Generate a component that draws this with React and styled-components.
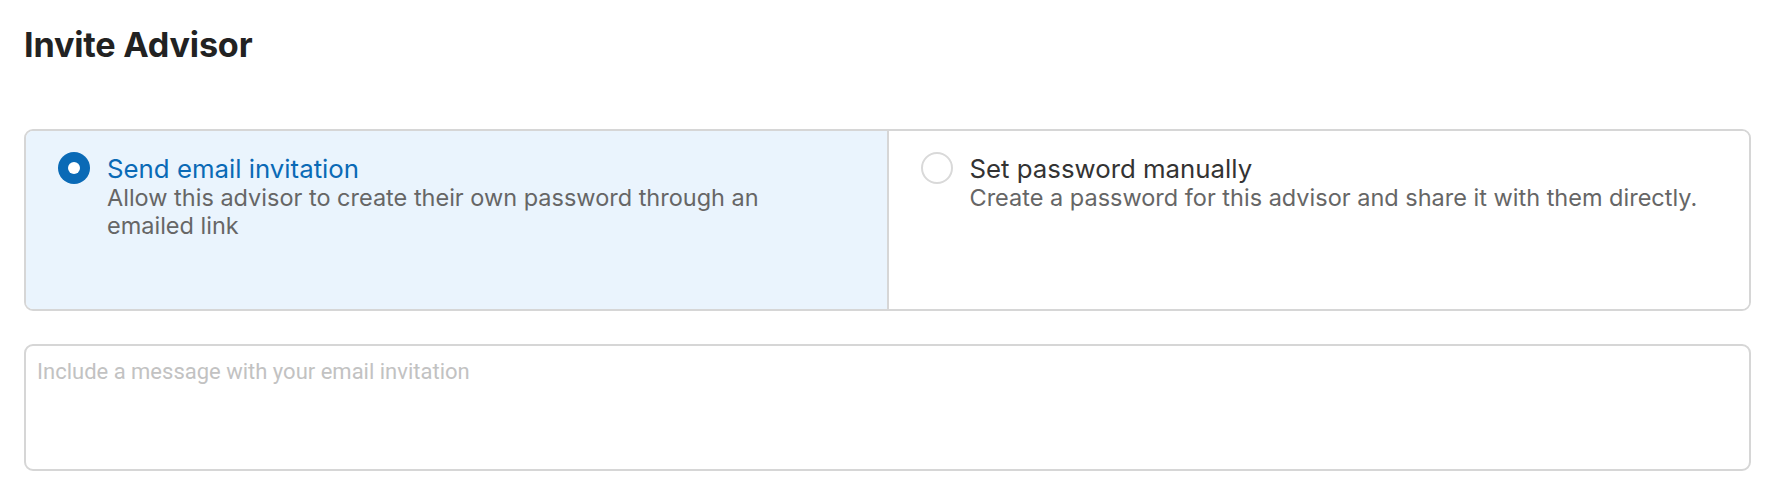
import styled, { createGlobalStyle } from 'styled-components';

const GlobalStyle = createGlobalStyle`
  body {
    margin: 0;
    background: #ffffff;
    font-family: Inter, "Liberation Sans", sans-serif;
  }
`;

const options = [
  {
    id: 'email',
    title: 'Send email invitation',
    description: 'Allow this advisor to create their own password through an emailed link',
  },
  {
    id: 'manual',
    title: 'Set password manually',
    description: 'Create a password for this advisor and share it with them directly.',
  },
];

const InviteAdvisor = () => {
  const selected = 'email';
  return (
    <Page>
      <GlobalStyle />
      <Heading>Invite Advisor</Heading>
      <OptionGroup>
        {options.map(option => (
          <Option key={option.id} active={option.id === selected}>
            <Radio active={option.id === selected} />
            <OptionText>
              <OptionTitle active={option.id === selected}>{option.title}</OptionTitle>
              <OptionDescription>{option.description}</OptionDescription>
            </OptionText>
          </Option>
        ))}
      </OptionGroup>
      <MessageBox placeholder="Include a message with your email invitation" />
    </Page>
  );
};

const Page = styled.div`
  padding: 0 25px 0 24px;
  box-sizing: border-box;
  width: 100%;
`;

const Heading = styled.h1`
  margin: 0;
  padding-top: 25px;
  font-size: 34.2px;
  line-height: 40px;
  font-weight: 700;
  color: #222222;
  letter-spacing: -0.2px;
`;

const OptionGroup = styled.div`
  margin-top: 64px;
  display: flex;
  height: 182px;
  border: 2px solid #d6d6d6;
  border-radius: 9px;
  overflow: hidden;
  box-sizing: border-box;
`;

const Option = styled.div`
  flex: 1;
  min-width: 0;
  display: flex;
  align-items: flex-start;
  gap: 17px;
  padding: 21px 32px;
  background: ${props => (props.active ? '#eaf4fd' : '#ffffff')};
  & + & {
    border-left: 2px solid #d6d6d6;
  }
`;

const Radio = styled.span`
  flex: none;
  width: 32px;
  height: 32px;
  border-radius: 50%;
  box-sizing: border-box;
  position: relative;
  background: ${props => (props.active ? '#0a6ab6' : '#ffffff')};
  border: ${props => (props.active ? 'none' : '2px solid #d9d9d9')};
  &::after {
    content: '';
    display: ${props => (props.active ? 'block' : 'none')};
    position: absolute;
    left: 10px;
    top: 10px;
    width: 12px;
    height: 12px;
    border-radius: 50%;
    background: #ffffff;
  }
`;

const OptionText = styled.div`
  display: flex;
  flex-direction: column;
  padding-top: 1px;
  padding-right: 10px;
`;

const OptionTitle = styled.div`
  font-size: 25.8px;
  line-height: 31px;
  color: ${props => (props.active ? '#0a6ab6' : '#333333')};
`;

const OptionDescription = styled.div`
  font-size: 23.5px;
  line-height: 28px;
  color: #666666;
`;

const MessageBox = styled.textarea`
  display: block;
  margin-top: 33px;
  width: 100%;
  height: 127px;
  box-sizing: border-box;
  border: 2px solid #d6d6d6;
  border-radius: 9px;
  padding: 11px 11px;
  resize: none;
  outline: none;
  font-family: Roboto, "Liberation Sans", sans-serif;
  font-size: 22px;
  line-height: 30px;
  color: #333333;
  &::placeholder {
    color: #c2c2c2;
  }
`;

export default InviteAdvisor;
